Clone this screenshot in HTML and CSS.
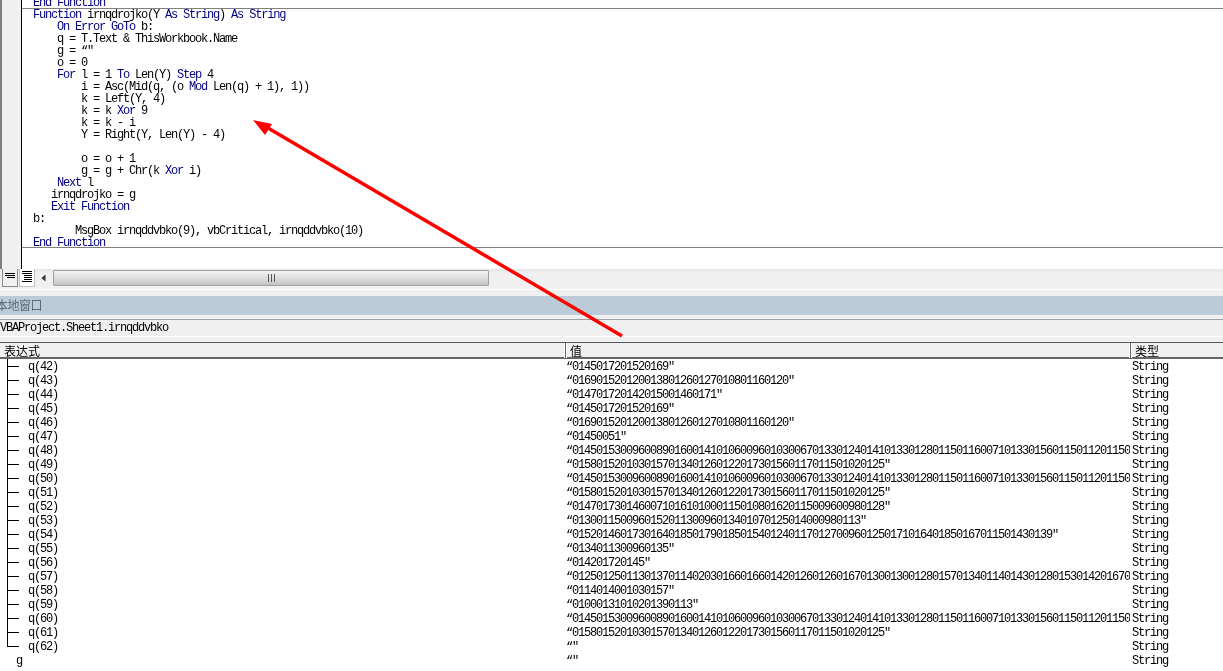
FILE: index.html
```html
<!DOCTYPE html>
<html lang="zh">
<head>
<meta charset="utf-8">
<title>VBA</title>
<link rel="stylesheet" href="styles.css">
</head>
<body>
<div class="app">
  <div class="editor">
    <div class="gutter"></div>
    <div class="code">
<div class="line"><b>End Function</b></div>
<div class="sep"></div>
<div class="line"><b>Function</b> irnqdrojko(Y <b>As</b> <b>String</b>) <b>As</b> <b>String</b></div>
<div class="line">    <b>On Error GoTo</b> b:</div>
<div class="line">    q = T.Text &amp; ThisWorkbook.Name</div>
<div class="line">    g = “″</div>
<div class="line">    o = 0</div>
<div class="line">    <b>For</b> l = 1 <b>To</b> Len(Y) <b>Step</b> 4</div>
<div class="line">        i = Asc(Mid(q, (o <b>Mod</b> Len(q) + 1), 1))</div>
<div class="line">        k = Left(Y, 4)</div>
<div class="line">        k = k <b>Xor</b> 9</div>
<div class="line">        k = k - i</div>
<div class="line">        Y = Right(Y, Len(Y) - 4)</div>
<div class="line"> </div>
<div class="line">        o = o + 1</div>
<div class="line">        g = g + Chr(k <b>Xor</b> i)</div>
<div class="line">    <b>Next</b> l</div>
<div class="line">   irnqdrojko = g</div>
<div class="line">   <b>Exit Function</b></div>
<div class="line">b:</div>
<div class="line">       MsgBox irnqddvbko(9), vbCritical, irnqddvbko(10)</div>
<div class="line"><b>End Function</b></div>
<div class="sep sep-end"></div>
    </div>
  </div>

  <div class="hbar">
    <div class="view-btn">
      <svg width="12" height="12" viewBox="0 0 12 12"><path d="M1 3.500h10M1 5.500h10M3 7.500h8" stroke="#000" fill="none"/></svg>
    </div>
    <div class="view-btn view-btn-on">
      <svg width="12" height="14" viewBox="0 0 12 14"><path d="M1 1.500h10M1 3.500h10M3 5.500h8M3 7.500h8M3 9.500h8M1 11.500h10" stroke="#000" fill="none"/></svg>
    </div>
    <div class="arrow-btn">
      <svg width="6" height="8" viewBox="0 0 6 8"><path d="M4.500 0.500v7L0.500 4z" fill="#333"/></svg>
    </div>
    <div class="thumb">
      <svg width="8" height="8" viewBox="0 0 8 8"><path d="M0.500 0v8M3.500 0v8M6.500 0v8" stroke="#555" fill="none"/></svg>
    </div>
  </div>

  <div class="gap"></div>
  <div class="title"><span class="title-text">本地窗口</span></div>
  <div class="context"><span class="context-text">VBAProject.Sheet1.irnqddvbko</span></div>

  <div class="head">
    <div class="hcell hcell-first">表达式</div>
    <div class="hcell">值</div>
    <div class="hcell">类型</div>
  </div>

  <div class="rows">
    <div class="row"><div class="name"><i class="tick"></i>q(42)</div><div class="val">“0145017201520169″</div><div class="typ">String</div></div>
    <div class="row"><div class="name"><i class="tick"></i>q(43)</div><div class="val">“016901520120013801260127010801160120″</div><div class="typ">String</div></div>
    <div class="row"><div class="name"><i class="tick"></i>q(44)</div><div class="val">“014701720142015001460171″</div><div class="typ">String</div></div>
    <div class="row"><div class="name"><i class="tick"></i>q(45)</div><div class="val">“0145017201520169″</div><div class="typ">String</div></div>
    <div class="row"><div class="name"><i class="tick"></i>q(46)</div><div class="val">“016901520120013801260127010801160120″</div><div class="typ">String</div></div>
    <div class="row"><div class="name"><i class="tick"></i>q(47)</div><div class="val">“01450051″</div><div class="typ">String</div></div>
    <div class="row"><div class="name"><i class="tick"></i>q(48)</div><div class="val">“014501530096008901600141010600960103006701330124014101330128011501160071013301560115011201150</div><div class="typ">String</div></div>
    <div class="row"><div class="name"><i class="tick"></i>q(49)</div><div class="val">“0158015201030157013401260122017301560117011501020125″</div><div class="typ">String</div></div>
    <div class="row"><div class="name"><i class="tick"></i>q(50)</div><div class="val">“014501530096008901600141010600960103006701330124014101330128011501160071013301560115011201150</div><div class="typ">String</div></div>
    <div class="row"><div class="name"><i class="tick"></i>q(51)</div><div class="val">“0158015201030157013401260122017301560117011501020125″</div><div class="typ">String</div></div>
    <div class="row"><div class="name"><i class="tick"></i>q(52)</div><div class="val">“0147017301460071016101000115010801620115009600980128″</div><div class="typ">String</div></div>
    <div class="row"><div class="name"><i class="tick"></i>q(53)</div><div class="val">“013001150096015201130096013401070125014000980113″</div><div class="typ">String</div></div>
    <div class="row"><div class="name"><i class="tick"></i>q(54)</div><div class="val">“01520146017301640185017901850154012401170127009601250171016401850167011501430139″</div><div class="typ">String</div></div>
    <div class="row"><div class="name"><i class="tick"></i>q(55)</div><div class="val">“0134011300960135″</div><div class="typ">String</div></div>
    <div class="row"><div class="name"><i class="tick"></i>q(56)</div><div class="val">“014201720145″</div><div class="typ">String</div></div>
    <div class="row"><div class="name"><i class="tick"></i>q(57)</div><div class="val">“012501250113013701140203016601660142012601260167013001300128015701340114014301280153014201670</div><div class="typ">String</div></div>
    <div class="row"><div class="name"><i class="tick"></i>q(58)</div><div class="val">“0114014001030157″</div><div class="typ">String</div></div>
    <div class="row"><div class="name"><i class="tick"></i>q(59)</div><div class="val">“01000131010201390113″</div><div class="typ">String</div></div>
    <div class="row"><div class="name"><i class="tick"></i>q(60)</div><div class="val">“014501530096008901600141010600960103006701330124014101330128011501160071013301560115011201150</div><div class="typ">String</div></div>
    <div class="row"><div class="name"><i class="tick"></i>q(61)</div><div class="val">“0158015201030157013401260122017301560117011501020125″</div><div class="typ">String</div></div>
    <div class="row"><div class="name"><i class="tick tick-last"></i>q(62)</div><div class="val">“″</div><div class="typ">String</div></div>
    <div class="row"><div class="name name-root">g</div><div class="val">“″</div><div class="typ">String</div></div>
  </div>

  <svg class="annot" width="1223" height="671" viewBox="0 0 1223 671">
    <path d="M622 336L268 128" stroke="#f00" stroke-width="3.500" fill="none"/>
    <path d="M253 120L272 124L265 135z" fill="#f00"/>
  </svg>
</div>
</body>
</html>
```

FILE: styles.css
```css
* { box-sizing: border-box; }

html, body {
  margin: 0;
  padding: 0;
  background: #fff;
}

.app {
  position: relative;
  width: 1223px;
  height: 671px;
  overflow: hidden;
  display: flex;
  flex-direction: column;
  font-family: "Liberation Mono", "Noto Sans CJK SC", monospace;
  font-size: 12px;
  letter-spacing: -1.2px;
  color: #000;
  will-change: transform;
}

.editor {
  display: flex;
  height: 269px;
  flex: none;
  overflow: hidden;
}

.gutter {
  width: 22px;
  flex: none;
  background: #f0f0f0;
  border-left: 2px solid #808080;
  border-right: 1px solid #000;
}

.code {
  flex: 1;
  margin-top: -4px;
}

.line {
  height: 12px;
  line-height: 14px;
  padding-left: 11px;
  white-space: pre;
}

.line b {
  font-weight: normal;
  color: #000080;
}

.sep {
  height: 1px;
  margin-bottom: -1px;
  background: #808080;
}

.sep-end {
  margin-top: -1px;
}

.hbar {
  display: flex;
  align-items: flex-start;
  height: 19px;
  flex: none;
  background: linear-gradient(#e6e6e6, #f0f0f0 4px);
}

.view-btn {
  width: 16px;
  height: 18px;
  margin-left: 2px;
  display: flex;
  align-items: flex-start;
  justify-content: center;
  padding-top: 1px;
  background: #f0f0f0;
  border: 1px solid #8a8a8a;
  border-top: 0;
}

.view-btn-on {
  margin-left: 1px;
  background: #fff;
  border-color: #c4c4c4;
}

.arrow-btn {
  width: 18px;
  height: 16px;
  display: flex;
  align-items: center;
  justify-content: center;
  padding-top: 2px;
}

.thumb {
  width: 436px;
  height: 16px;
  margin-top: 1px;
  display: flex;
  align-items: center;
  justify-content: center;
  padding-left: 2px;
  background: linear-gradient(#f2f2f2, #e0e0e0 45%, #c4c4c4);
  border: 1px solid #a0a0a0;
  border-radius: 1px;
}

.gap {
  height: 8px;
  flex: none;
  background: linear-gradient(#f0f0f0 0, #f0f0f0 1px, #fff 1px, #fff 2px, #f0f0f0 2px);
}

.title {
  height: 19px;
  flex: none;
  line-height: 17px;
  background: #bccbd9;
  color: #5b6b7a;
  overflow: hidden;
}

.title-text {
  display: block;
  margin-left: -4px;
  letter-spacing: -0.5px;
  font-family: "Noto Sans CJK SC", sans-serif;
}

.context {
  height: 27px;
  flex: none;
  padding: 4px 0 5px;
  background: #f0f0f0;
}

.context-text {
  display: block;
  height: 18px;
  line-height: 17px;
  border-top: 1px solid #a0a0a0;
  border-bottom: 1px solid #fff;
}

.head {
  display: grid;
  grid-template-columns: 565px 565px 1fr;
  height: 17px;
  flex: none;
  background: #f0f0f0;
  border-top: 1px solid #555;
  border-bottom: 2px solid #666;
}

.hcell {
  padding-left: 4px;
  line-height: 15px;
  font-family: "Noto Sans CJK SC", sans-serif;
  letter-spacing: 0;
  border-left: 1px solid #666;
  box-shadow: inset 1px 0 0 #fff, -1px 0 0 #fff;
}

.hcell-first {
  border-left: 0;
  box-shadow: none;
  padding-left: 4px;
}

.rows {
  flex: 1;
  background: #fff;
}

.row {
  display: grid;
  grid-template-columns: 565px 565px 1fr;
  height: 14px;
  line-height: 16px;
}

.name {
  display: flex;
  padding-left: 7px;
  white-space: pre;
}

.name-root {
  padding-left: 16px;
}

.tick {
  display: block;
  width: 12px;
  height: 14px;
  margin-right: 9px;
  flex: none;
  border-left: 1px solid #000;
  background: linear-gradient(#000, #000) 0 7px / 100% 1px no-repeat;
}

.tick-last {
  height: 8px;
}

.val {
  padding-left: 1px;
  white-space: pre;
  overflow: hidden;
}

.typ {
  padding-left: 2px;
}

.annot {
  position: absolute;
  left: 0;
  top: 0;
  pointer-events: none;
}
```
